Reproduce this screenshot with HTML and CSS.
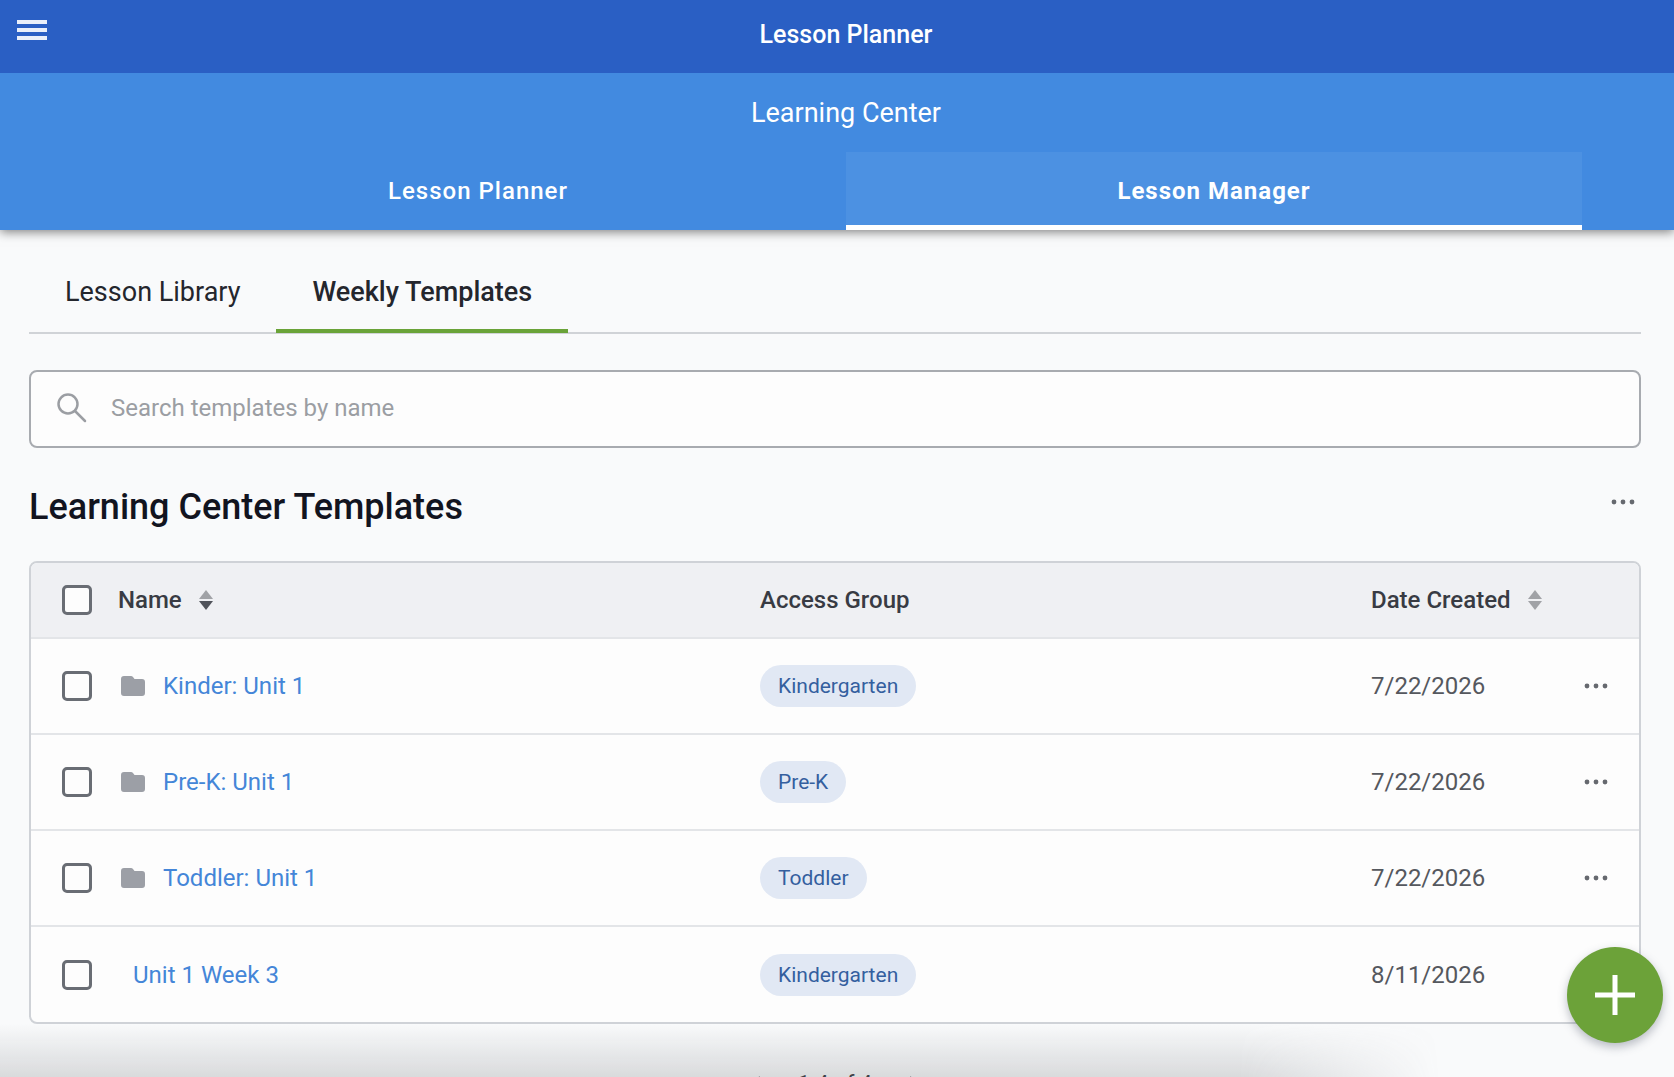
FILE: index.html
```html
<!DOCTYPE html>
<html lang="en">
<head>
<meta charset="utf-8">
<meta name="viewport" content="width=device-width, initial-scale=1">
<title>Lesson Planner</title>
<link rel="stylesheet" href="styles.css">
</head>
<body>
<svg class="sprite" aria-hidden="true">
  <symbol id="dots" viewBox="0 0 24 6"><circle cx="3" cy="3" r="2.4"/><circle cx="12" cy="3" r="2.4"/><circle cx="21" cy="3" r="2.4"/></symbol>
  <symbol id="folder" viewBox="0 0 24 20"><path d="M3 0h7q1.200 0 2 1l1.500 2H21q3 0 3 3v11q0 3-3 3H3q-3 0-3-3V3q0-3 3-3z"/></symbol>
</svg>
<div class="app">
  <header class="header">
    <div class="topbar">
      <button class="menu" aria-label="Open menu"><svg width="30" height="20" viewBox="0 0 30 20"><path d="M0 0h30v4H0zM0 8h30v4H0zM0 16h30v4H0z"/></svg></button>
      <h1 class="topbar-title">Lesson Planner</h1>
    </div>
    <div class="subbar">
      <div class="center-name">Learning Center</div>
      <nav class="main-tabs">
        <a class="main-tab" href="#planner">Lesson Planner</a>
        <a class="main-tab main-tab-active" href="#manager">Lesson Manager</a>
      </nav>
    </div>
  </header>

  <main class="content">
    <nav class="sub-tabs">
      <a class="sub-tab" href="#library">Lesson Library</a>
      <a class="sub-tab sub-tab-active" href="#templates">Weekly Templates</a>
    </nav>

    <label class="search">
      <svg width="30" height="30" viewBox="0 0 30 30"><circle cx="11" cy="11" r="9.500"/><path d="M18 18l10 10"/></svg>
      <input class="search-input" type="text" placeholder="Search templates by name" aria-label="Search templates by name">
    </label>

    <div class="section-head">
      <h2 class="section-title">Learning Center Templates</h2>
      <button class="more" aria-label="Template actions"><svg width="24" height="6"><use href="#dots"/></svg></button>
    </div>

    <div class="table-card">
      <table class="table">
        <colgroup><col class="col-check"><col class="col-name"><col class="col-group"><col class="col-date"><col class="col-more"></colgroup>
        <thead>
          <tr>
            <th class="check-cell"><input class="check" type="checkbox" aria-label="Select all"></th>
            <th><button class="sort">Name <svg width="14" height="20" viewBox="0 0 14 20"><path class="arrow" d="M7 0l7 9H0z"/><path class="arrow arrow-on" d="M7 20l7-9H0z"/></svg></button></th>
            <th>Access Group</th>
            <th><button class="sort">Date Created <svg width="14" height="20" viewBox="0 0 14 20"><path class="arrow" d="M7 0l7 9H0z"/><path class="arrow" d="M7 20l7-9H0z"/></svg></button></th>
            <th></th>
          </tr>
        </thead>
        <tbody>
          <tr>
            <td class="check-cell"><input class="check" type="checkbox" aria-label="Select Kinder: Unit 1"></td>
            <td><a class="name" href="#kinder"><svg class="folder" width="24" height="20"><use href="#folder"/></svg>Kinder: Unit 1</a></td>
            <td><span class="pill">Kindergarten</span></td>
            <td>7/22/2026</td>
            <td><button class="more" aria-label="Actions"><svg width="24" height="6"><use href="#dots"/></svg></button></td>
          </tr>
          <tr>
            <td class="check-cell"><input class="check" type="checkbox" aria-label="Select Pre-K: Unit 1"></td>
            <td><a class="name" href="#prek"><svg class="folder" width="24" height="20"><use href="#folder"/></svg>Pre-K: Unit 1</a></td>
            <td><span class="pill">Pre-K</span></td>
            <td>7/22/2026</td>
            <td><button class="more" aria-label="Actions"><svg width="24" height="6"><use href="#dots"/></svg></button></td>
          </tr>
          <tr>
            <td class="check-cell"><input class="check" type="checkbox" aria-label="Select Toddler: Unit 1"></td>
            <td><a class="name" href="#toddler"><svg class="folder" width="24" height="20"><use href="#folder"/></svg>Toddler: Unit 1</a></td>
            <td><span class="pill">Toddler</span></td>
            <td>7/22/2026</td>
            <td><button class="more" aria-label="Actions"><svg width="24" height="6"><use href="#dots"/></svg></button></td>
          </tr>
          <tr>
            <td class="check-cell"><input class="check" type="checkbox" aria-label="Select Unit 1 Week 3"></td>
            <td><a class="name name-plain" href="#week3">Unit 1 Week 3</a></td>
            <td><span class="pill">Kindergarten</span></td>
            <td>8/11/2026</td>
            <td></td>
          </tr>
        </tbody>
      </table>
    </div>

    <div class="pager">
      <button class="page-btn" aria-label="Previous page"><svg width="10" height="16" viewBox="0 0 10 16"><path d="M8 1L2 8l6 7"/></svg></button>
      <span>1-4 of 4</span>
      <button class="page-btn" aria-label="Next page"><svg width="10" height="16" viewBox="0 0 10 16"><path d="M2 1l6 7-6 7"/></svg></button>
    </div>
  </main>

  <div class="bottom-shade"></div>
  <button class="fab" aria-label="Add template"><svg width="40" height="40" viewBox="0 0 40 40"><path d="M20 0v40M0 20h40"/></svg></button>
</div>
</body>
</html>
```

FILE: styles.css
```css
* { box-sizing: border-box; }

body {
  margin: 0;
  font-family: Roboto, "Liberation Sans", sans-serif;
  font-size: 24px;
  color: #55585e;
}

button {
  display: inline-flex;
  align-items: center;
  margin: 0;
  padding: 0;
  border: 0;
  background: none;
  color: inherit;
  font: inherit;
  cursor: pointer;
}

a { color: inherit; text-decoration: none; }

.sprite { display: none; }

.app {
  position: relative;
  height: 100vh;
  overflow: hidden;
  background: #f9fafb;
}

/* Header */
.header {
  position: relative;
  color: #fff;
  box-shadow: 0 2px 10px rgba(0, 0, 0, 0.5);
}

.topbar {
  display: grid;
  grid-template-columns: 48px 1fr 30px;
  align-items: center;
  height: 73px;
  background: #2a5fc4;
}

.menu { padding: 0 0 13px 17px; }
.menu svg { fill: #e9effa; }

.topbar-title {
  margin: 0;
  padding-bottom: 4px;
  font-size: 25px;
  font-weight: 500;
  line-height: 32px;
  text-align: center;
}

.subbar {
  padding: 24px 92px 0 110px;
  background: #428ae0;
}

.center-name {
  margin-bottom: 23px;
  font-size: 27px;
  line-height: 32px;
  text-align: center;
}

.main-tabs { display: flex; }

.main-tab {
  flex: 1;
  padding-top: 5px;
  border-bottom: 5px solid transparent;
  font-size: 24px;
  font-weight: 500;
  line-height: 68px;
  letter-spacing: 1px;
  text-align: center;
}

.main-tab-active {
  border-color: #fff;
  background: #4c91e2;
  background-clip: padding-box;
  font-weight: 700;
}

/* Content */
.content { padding: 23px 33px 0 29px; }

.sub-tabs {
  display: flex;
  border-bottom: 2px solid #d0d3d7;
}

.sub-tab {
  padding: 2px 36px 0;
  border-bottom: 4px solid transparent;
  margin-bottom: -1px;
  color: #24262d;
  font-size: 27px;
  line-height: 74px;
}

.sub-tab-active { border-color: #6aa338; font-weight: 500; }

.search {
  display: flex;
  align-items: center;
  gap: 24px;
  height: 78px;
  margin-top: 36px;
  padding: 0 26px 2px;
  border: 2px solid #a8abb0;
  border-radius: 8px;
  background: #fdfdfd;
}

.search svg { fill: none; stroke: #9b9ea3; stroke-width: 2.500; stroke-linecap: round; }

.search-input {
  flex: 1;
  padding: 0;
  border: 0;
  outline: 0;
  background: none;
  color: #24262d;
  font: inherit;
}

.search-input::placeholder { color: #9b9ea3; opacity: 1; }

.section-head {
  display: flex;
  align-items: flex-start;
  justify-content: space-between;
  padding: 37px 6px 31px 0;
}

.section-title {
  margin: 0;
  color: #12141f;
  font-size: 36px;
  font-weight: 500;
  line-height: 45px;
}

.more { display: flex; height: 34px; fill: #66696f; }

.table-card {
  overflow: hidden;
  border: 2px solid #cfd2d7;
  border-radius: 8px;
  background: #fdfdfd;
}

.table {
  width: 100%;
  border-collapse: collapse;
  table-layout: fixed;
}

.col-check { width: 87px; }
.col-name { width: 642px; }
.col-date { width: 213px; }
.col-more { width: 55px; }

th, td { height: 96px; padding: 0; text-align: left; border-top: 2px solid #e3e5e8; }

th {
  height: 75px;
  border-top: 0;
  background: #eff0f3;
  color: #383b43;
  font-weight: 500;
}

.check-cell { padding-left: 31px; }

.check {
  display: block;
  width: 30px;
  height: 30px;
  margin: 0;
  appearance: none;
  border: 3px solid #696d74;
  border-radius: 5px;
  background: #fdfdfd;
}

.sort { gap: 17px; }
.arrow { fill: #a0a2a6; }
.arrow-on { fill: #50535a; }

.name {
  display: flex;
  align-items: center;
  gap: 18px;
  padding-left: 3px;
  color: #4486d8;
}

.name-plain { padding-left: 15px; }
.folder { fill: #9c9fa6; }

.pill {
  display: inline-block;
  padding: 0 18px;
  border-radius: 21px;
  background: #e1e8f4;
  color: #345f9f;
  font-size: 21px;
  line-height: 42px;
}

.pager {
  display: flex;
  align-items: center;
  justify-content: center;
  gap: 36px;
  margin-top: 44px;
  color: #383b43;
  font-size: 22px;
  line-height: 32px;
}

.page-btn svg { fill: none; stroke: #66696f; stroke-width: 2; }

/* Shade over the bottom edge of the window */
.bottom-shade {
  position: absolute;
  right: 0;
  bottom: 0;
  left: 0;
  height: 54px;
  background: linear-gradient(to bottom, rgba(90, 94, 100, 0), rgba(90, 94, 100, 0.2));
  -webkit-mask-image: linear-gradient(to right, #000 74%, transparent 86%);
  mask-image: linear-gradient(to right, #000 74%, transparent 86%);
  pointer-events: none;
}

.fab {
  position: absolute;
  right: 11px;
  bottom: 34px;
  justify-content: center;
  width: 96px;
  height: 96px;
  border-radius: 50%;
  background: #6ca239;
  box-shadow: 0 4px 10px rgba(60, 70, 90, 0.35);
}

.fab svg { stroke: #fff; stroke-width: 5; }
```
